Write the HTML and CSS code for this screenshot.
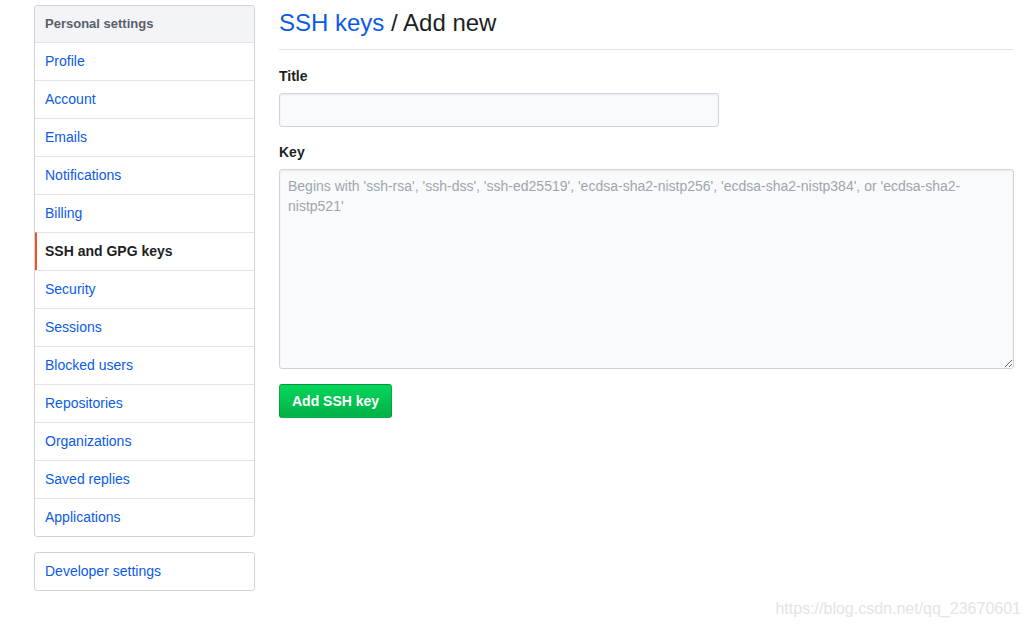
FILE: index.html
```html
<!DOCTYPE html>
<html lang="en">
<head>
    <meta charset="UTF-8">
    <title>SSH keys / Add new</title>
    <link rel="stylesheet" href="styles.css">
</head>
<body>
    <div class="layout">
        <div class="sidebar">
            <nav class="menu">
                <h3 class="menu-heading">Personal settings</h3>
                <a class="menu-item" href="#">Profile</a>
                <a class="menu-item" href="#">Account</a>
                <a class="menu-item" href="#">Emails</a>
                <a class="menu-item" href="#">Notifications</a>
                <a class="menu-item" href="#">Billing</a>
                <a class="menu-item selected" href="#">SSH and GPG keys</a>
                <a class="menu-item" href="#">Security</a>
                <a class="menu-item" href="#">Sessions</a>
                <a class="menu-item" href="#">Blocked users</a>
                <a class="menu-item" href="#">Repositories</a>
                <a class="menu-item" href="#">Organizations</a>
                <a class="menu-item" href="#">Saved replies</a>
                <a class="menu-item" href="#">Applications</a>
            </nav>
            <nav class="menu">
                <a class="menu-item first" href="#">Developer settings</a>
            </nav>
        </div>

        <div class="main">
            <div class="subhead">
                <h2 class="subhead-title"><a href="#">SSH keys</a> / Add new</h2>
            </div>
            <form>
                <div class="form-group">
                    <label for="key-title">Title</label>
                    <input type="text" id="key-title" class="form-control">
                </div>
                <div class="form-group">
                    <label for="key-body">Key</label>
                    <textarea id="key-body" class="form-control key-area" placeholder="Begins with 'ssh-rsa', 'ssh-dss', 'ssh-ed25519', 'ecdsa-sha2-nistp256', 'ecdsa-sha2-nistp384', or 'ecdsa-sha2-nistp521'"></textarea>
                </div>
                <button type="button" class="btn-primary">Add SSH key</button>
            </form>
        </div>
    </div>

    <div class="watermark">https://blog.csdn.net/qq_23670601</div>
</body>
</html>
```

FILE: styles.css
```css
body {
    margin: 0;
    font-family: 'Liberation Sans', Arial, sans-serif;
    font-size: 14px;
    line-height: 1.5;
    color: #1c1f24;
    background-color: #fff;
}

a {
    color: #0b5be6;
    text-decoration: none;
}

.layout {
    display: flex;
    gap: 24px;
    padding: 5px 14px 0 34px;
}

.sidebar {
    width: 221px;
    flex-shrink: 0;
}

.menu {
    border: 1px solid #d1d5da;
    border-radius: 3px;
    margin-bottom: 15px;
    overflow: hidden;
}

.menu-heading {
    margin: 0;
    padding: 8px 10px;
    font-size: 13px;
    line-height: 20px;
    font-weight: bold;
    color: #586069;
    background-color: #f3f4f7;
}

.menu-item {
    display: block;
    padding: 8px 10px;
    line-height: 21px;
    border-top: 1px solid #e1e4e8;
}

.menu-item.first {
    border-top: none;
}

.menu-item.selected {
    font-weight: bold;
    color: #1c1f24;
    border-left: 2px solid #f4511e;
    padding-left: 8px;
}

.main {
    flex: 1;
}

.subhead {
    padding-bottom: 8px;
    border-bottom: 1px solid #e1e4e8;
    margin-bottom: 16px;
}

.subhead-title {
    margin: 0;
    font-size: 24px;
    line-height: 36px;
    font-weight: normal;
}

.form-group {
    margin-bottom: 15px;
}

.form-group label {
    display: block;
    font-weight: bold;
    margin-bottom: 6px;
}

.form-control {
    box-sizing: border-box;
    display: block;
    font-family: inherit;
    font-size: 14px;
    line-height: 20px;
    color: #1c1f24;
    background-color: #f9fafc;
    border: 1px solid #d1d5da;
    border-radius: 3px;
    box-shadow: inset 0 1px 2px rgba(27, 31, 35, 0.075);
    padding: 6px 8px;
    margin: 0;
}

input.form-control {
    width: 440px;
    height: 34px;
}

.key-area {
    width: 100%;
    height: 200px;
    resize: vertical;
}

.key-area::placeholder {
    color: #a0a6ac;
}

.btn-primary {
    font-family: inherit;
    font-size: 14px;
    font-weight: bold;
    line-height: 20px;
    height: 34px;
    padding: 6px 12px;
    color: #fff;
    background-color: #00b548;
    background-image: linear-gradient(-180deg, #06d65c 0%, #00b548 90%);
    border: 1px solid rgba(27, 31, 35, 0.2);
    border-radius: 3px;
    cursor: pointer;
}

.watermark {
    position: absolute;
    right: 7px;
    top: 597px;
    font-size: 16px;
    color: #e4e4e4;
}
```
